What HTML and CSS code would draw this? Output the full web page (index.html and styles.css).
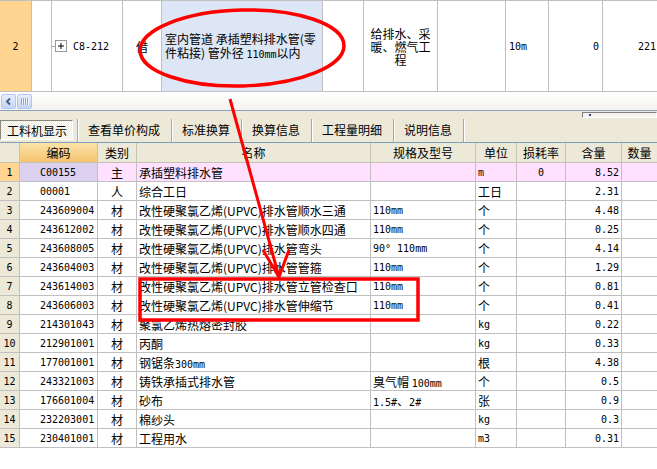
FILE: index.html
```html
<!DOCTYPE html>
<html lang="zh-CN">
<head>
<meta charset="utf-8">
<title>工料机显示</title>
<link rel="stylesheet" href="styles.css">
</head>
<body>
<div class="screen">
  <div class="top-row">
    <div class="c rh-top">2</div>
    <div class="c"></div>
    <div class="c tree-cell">
      <span class="tree-line"></span>
      <svg class="plus" width="12" height="12" viewBox="0 0 12 12"><rect x="0.5" y="0.5" width="11" height="11" fill="#fff" stroke="#9a9a9a"/><path d="M3 6h6M6 3v6" stroke="#000" stroke-width="1"/></svg>
      <span class="m">C8-212</span>
    </div>
    <div class="c center">借</div>
    <div class="c desc"><div class="txt">室内管道 承插塑料排水管(零<br>件粘接) 管外径 <span class="m">110mm</span>以内</div></div>
    <div class="c"></div>
    <div class="c center wrap3"><div class="txt">给排水、采<br>暖、燃气工<br>程</div></div>
    <div class="c"></div>
    <div class="c left3"><span class="m">10m</span></div>
    <div class="c right"><span class="m">0</span></div>
    <div class="c right r2"><span class="m">221</span></div>
  </div>

  <div class="hscroll">
    <div class="sbtn">
      <svg width="13" height="13" viewBox="0 0 13 13"><path d="M8 3.5L5 6.5L8 9.5" fill="none" stroke="#4d6185" stroke-width="2"/></svg>
    </div>
    <div class="sbtn thumb"><span class="grip"></span><span class="grip"></span><span class="grip"></span><span class="grip"></span></div>
  </div>

  <div class="toolbar">
    <div class="tab sel">工料机显示</div>
    <div class="sep first"></div>
    <div class="tab">查看单价构成</div>
    <div class="sep"></div>
    <div class="tab">标准换算</div>
    <div class="sep"></div>
    <div class="tab">换算信息</div>
    <div class="sep"></div>
    <div class="tab">工程量明细</div>
    <div class="sep"></div>
    <div class="tab">说明信息</div>
    <div class="sep"></div>
    <div class="mini"><span class="dot"></span></div>
  </div>

  <div class="table">
    <div class="row hdr">
      <div class="c"></div>
      <div class="c code-h">编码</div>
      <div class="c">类别</div>
      <div class="c">名称</div>
      <div class="c">规格及型号</div>
      <div class="c">单位</div>
      <div class="c">损耗率</div>
      <div class="c">含量</div>
      <div class="c">数量</div>
    </div>
    <div class="row cur">
      <div class="c no m">1</div><div class="c code m">C00155</div><div class="c kind">主</div><div class="c name">承插塑料排水管</div><div class="c spec"></div><div class="c unit m">m</div><div class="c loss m">0</div><div class="c qty m">8.52</div><div class="c"></div>
    </div>
    <div class="row">
      <div class="c no m">2</div><div class="c code m">00001</div><div class="c kind">人</div><div class="c name">综合工日</div><div class="c spec"></div><div class="c unit">工日</div><div class="c loss"></div><div class="c qty m">2.31</div><div class="c"></div>
    </div>
    <div class="row">
      <div class="c no m">3</div><div class="c code m">243609004</div><div class="c kind">材</div><div class="c name">改性硬聚氯乙烯(UPVC)排水管顺水三通</div><div class="c spec m">110mm</div><div class="c unit">个</div><div class="c loss"></div><div class="c qty m">4.48</div><div class="c"></div>
    </div>
    <div class="row">
      <div class="c no m">4</div><div class="c code m">243612002</div><div class="c kind">材</div><div class="c name">改性硬聚氯乙烯(UPVC)排水管顺水四通</div><div class="c spec m">110mm</div><div class="c unit">个</div><div class="c loss"></div><div class="c qty m">0.25</div><div class="c"></div>
    </div>
    <div class="row">
      <div class="c no m">5</div><div class="c code m">243608005</div><div class="c kind">材</div><div class="c name">改性硬聚氯乙烯(UPVC)排水管弯头</div><div class="c spec m">90°  110mm</div><div class="c unit">个</div><div class="c loss"></div><div class="c qty m">4.14</div><div class="c"></div>
    </div>
    <div class="row">
      <div class="c no m">6</div><div class="c code m">243604003</div><div class="c kind">材</div><div class="c name">改性硬聚氯乙烯(UPVC)排水管管箍</div><div class="c spec m">110mm</div><div class="c unit">个</div><div class="c loss"></div><div class="c qty m">1.29</div><div class="c"></div>
    </div>
    <div class="row">
      <div class="c no m">7</div><div class="c code m">243614003</div><div class="c kind">材</div><div class="c name">改性硬聚氯乙烯(UPVC)排水管立管检查口</div><div class="c spec m">110mm</div><div class="c unit">个</div><div class="c loss"></div><div class="c qty m">0.81</div><div class="c"></div>
    </div>
    <div class="row">
      <div class="c no m">8</div><div class="c code m">243606003</div><div class="c kind">材</div><div class="c name">改性硬聚氯乙烯(UPVC)排水管伸缩节</div><div class="c spec m">110mm</div><div class="c unit">个</div><div class="c loss"></div><div class="c qty m">0.41</div><div class="c"></div>
    </div>
    <div class="row">
      <div class="c no m">9</div><div class="c code m">214301043</div><div class="c kind">材</div><div class="c name">聚氯乙烯热熔密封胶</div><div class="c spec"></div><div class="c unit m">kg</div><div class="c loss"></div><div class="c qty m">0.22</div><div class="c"></div>
    </div>
    <div class="row">
      <div class="c no m">10</div><div class="c code m">212901001</div><div class="c kind">材</div><div class="c name">丙酮</div><div class="c spec"></div><div class="c unit m">kg</div><div class="c loss"></div><div class="c qty m">0.33</div><div class="c"></div>
    </div>
    <div class="row">
      <div class="c no m">11</div><div class="c code m">177001001</div><div class="c kind">材</div><div class="c name">钢锯条<span class="m">300mm</span></div><div class="c spec"></div><div class="c unit">根</div><div class="c loss"></div><div class="c qty m">4.38</div><div class="c"></div>
    </div>
    <div class="row">
      <div class="c no m">12</div><div class="c code m">243321003</div><div class="c kind">材</div><div class="c name">铸铁承插式排水管</div><div class="c spec">臭气帽 <span class="m">100mm</span></div><div class="c unit">个</div><div class="c loss"></div><div class="c qty m">0.5</div><div class="c"></div>
    </div>
    <div class="row">
      <div class="c no m">13</div><div class="c code m">176601004</div><div class="c kind">材</div><div class="c name">砂布</div><div class="c spec"><span class="m">1.5#</span>、<span class="m">2#</span></div><div class="c unit">张</div><div class="c loss"></div><div class="c qty m">0.9</div><div class="c"></div>
    </div>
    <div class="row">
      <div class="c no m">14</div><div class="c code m">232203001</div><div class="c kind">材</div><div class="c name">棉纱头</div><div class="c spec"></div><div class="c unit m">kg</div><div class="c loss"></div><div class="c qty m">0.3</div><div class="c"></div>
    </div>
    <div class="row">
      <div class="c no m">15</div><div class="c code m">230401001</div><div class="c kind">材</div><div class="c name">工程用水</div><div class="c spec"></div><div class="c unit m">m3</div><div class="c loss"></div><div class="c qty m">0.31</div><div class="c"></div>
    </div>
  </div>

  <svg class="marks" width="657" height="469" viewBox="0 0 657 469">
    <ellipse cx="242" cy="48" rx="102" ry="38" fill="none" stroke="#ff0000" stroke-width="3.5" transform="rotate(-1.5 242 48)"/>
    <path d="M230 99L279 277M263 250L279 277L289 250" fill="none" stroke="#ff0000" stroke-width="3"/>
    <rect x="140" y="279" width="278" height="41" fill="none" stroke="#ff0000" stroke-width="3.5"/>
  </svg>
</div>
</body>
</html>
```

FILE: styles.css
```css
* { box-sizing: border-box; }

body {
  margin: 0;
  background: #fff;
  color: #000;
  font-family: "Noto Sans CJK SC", "Noto Sans", sans-serif;
  font-size: 12px;
}

.screen {
  position: relative;
  width: 657px;
  height: 469px;
  overflow: hidden;
  background: #fff;
}

.m {
  font-family: "DejaVu Sans Mono", "Liberation Mono", "Noto Sans CJK SC", monospace;
  font-size: 10px;
}

/* upper grid row */
.top-row {
  display: grid;
  grid-template-columns: 32px 20px 71px 39px 161px 41px 74px 68px 43px 54px 54px;
  height: 92px;
  border-top: 1px solid #c0c0c0;
  border-bottom: 1px solid #c0c0c0;
}

.top-row .c {
  border-right: 1px solid #c0c0c0;
  display: flex;
  align-items: center;
  overflow: hidden;
  white-space: nowrap;
}

.top-row .rh-top {
  background: #ffd591;
  justify-content: center;
  font-family: "DejaVu Sans Mono", monospace;
  font-size: 10px;
}

.top-row .center { justify-content: center; text-align: center; }
.top-row .right { justify-content: flex-end; padding-right: 3px; }
.top-row .r2 { padding-right: 1px; border-right: none; }
.top-row .left3 { padding-left: 3px; }

.tree-line {
  width: 3px;
  height: 1px;
  background: #a0a0a0;
}
.plus { flex: none; margin-right: 6px; }

.top-row .desc {
  background: #dce6f4;
  padding: 2px 0 0 3px;
  line-height: 14px;
}

.top-row .wrap3 {
  line-height: 13px;
}

.txt { white-space: nowrap; }

/* horizontal scrollbar */
.hscroll {
  height: 19px;
  border-bottom: 1px solid #8ea2bd;
  background: linear-gradient(#ffffff, #f4f3ee);
  display: flex;
  align-items: center;
  padding-left: 1px;
  gap: 1px;
}

.sbtn {
  width: 15px;
  height: 15px;
  border: 1px solid #b3c6f2;
  border-radius: 2px;
  background: linear-gradient(#e6eefd, #c4d5fb);
  display: flex;
  align-items: center;
  justify-content: center;
}

.thumb { gap: 1px; }
.grip {
  width: 1px;
  height: 7px;
  background: #8aa5e2;
  box-shadow: 1px 0 0 #eef3ff;
}

/* toolbar with tabs */
.toolbar {
  height: 32px;
  border-bottom: 1px solid #7f9db9;
  background: #ece9d8;
  display: flex;
  align-items: flex-end;
}

.tab {
  height: 20px;
  line-height: 19px;
  margin-bottom: 2px;
  padding: 0 11px 0 9px;
  white-space: nowrap;
}

.tab.sel {
  padding: 0 5px 0 6px;
  margin-right: 4px;
  border: 1px solid;
  border-color: #8a887d #ffffff #ffffff #8a887d;
  background: repeating-conic-gradient(#ffffff 0 25%, #ece9d8 0 50%) 0 0 / 2px 2px;
}

.sep {
  width: 2px;
  height: 23px;
  border-left: 1px solid #aca899;
  border-right: 1px solid #ffffff;
}

.mini {
  margin-left: auto;
  align-self: flex-start;
  margin-top: 1px;
  width: 75px;
  height: 6px;
  border: 1px solid;
  border-color: #808080 #ffffff #ffffff #808080;
  background: #f3f2ec;
  position: relative;
}

.dot {
  position: absolute;
  left: 6px;
  top: 1px;
  width: 2px;
  height: 2px;
  background: #1c3fa0;
}

/* lower table */
.table {
  display: flex;
  flex-direction: column;
}

.row {
  display: grid;
  grid-template-columns: 20px 78px 39px 234px 105px 41px 49px 56px 35px;
  height: 19px;
}

.row .c {
  border-right: 1px solid #c0c0c0;
  border-bottom: 1px solid #c0c0c0;
  white-space: nowrap;
  overflow: hidden;
  line-height: 19px;
}

.row .c:last-child { border-right: none; }

.row.hdr {
  height: 20px;
  background: #ece9d8;
}

.row.hdr .c {
  text-align: center;
  line-height: 19px;
  border-right-color: #c5c2b2;
  border-bottom-color: #c5c2b2;
}

.row.hdr .code-h {
  background: linear-gradient(#fbe3aa, #f5c46e);
}

.row .no {
  background: #ece9d8;
  text-align: center;
}

.row .code { padding-left: 20px; }
.row .kind { text-align: center; }
.row .name { padding-left: 2px; }
.row .spec { padding-left: 2px; }
.row .unit { padding-left: 2px; }
.row .loss { text-align: center; }
.row .qty { text-align: right; padding-right: 2px; }

.row.cur .c { background: #ffe1ff; }
.row.cur .no { background: #ffd591; }
.row.cur .code { background: #dcd0f0; }

/* red annotations drawn on top of the screenshot */
.marks {
  position: absolute;
  left: 0;
  top: 0;
  pointer-events: none;
}
```
